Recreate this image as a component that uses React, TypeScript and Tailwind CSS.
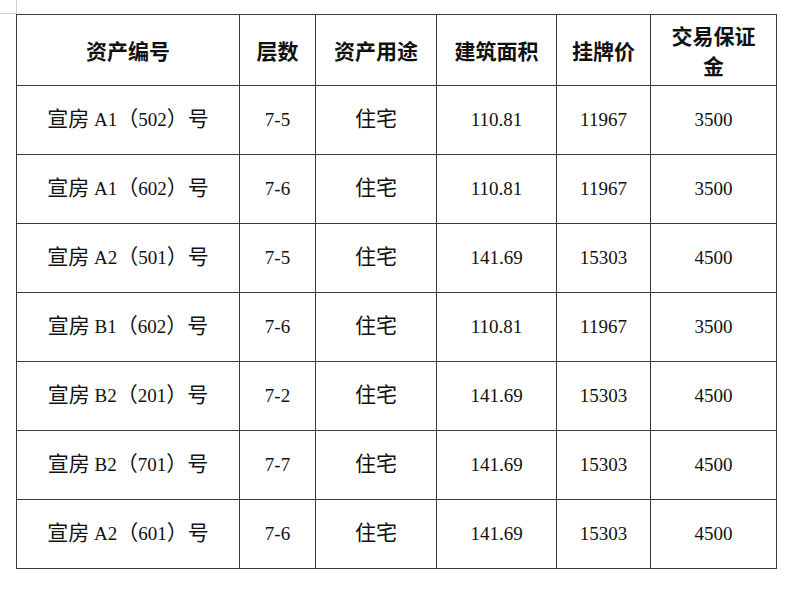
const rows = [
  { id: "宣房 A1（502）号", floor: "7-5", use: "住宅", area: "110.81", price: "11967", deposit: "3500" },
  { id: "宣房 A1（602）号", floor: "7-6", use: "住宅", area: "110.81", price: "11967", deposit: "3500" },
  { id: "宣房 A2（501）号", floor: "7-5", use: "住宅", area: "141.69", price: "15303", deposit: "4500" },
  { id: "宣房 B1（602）号", floor: "7-6", use: "住宅", area: "110.81", price: "11967", deposit: "3500" },
  { id: "宣房 B2（201）号", floor: "7-2", use: "住宅", area: "141.69", price: "15303", deposit: "4500" },
  { id: "宣房 B2（701）号", floor: "7-7", use: "住宅", area: "141.69", price: "15303", deposit: "4500" },
  { id: "宣房 A2（601）号", floor: "7-6", use: "住宅", area: "141.69", price: "15303", deposit: "4500" },
];

const th = "border border-[#3a3a3a] text-center align-middle font-bold text-[21px] leading-[30px] p-0";
const td = "border border-[#3a3a3a] text-center align-middle text-[19px] p-0";

// CJK runs come out a touch larger than the Latin digits in the scan
function Mixed({ text }: { text: string }) {
  const parts = text.split(/([\u3000-\u9fff\uff00-\uffef]+)/);
  return (
    <>
      {parts.map((p, i) =>
        /[\u3000-\u9fff\uff00-\uffef]/.test(p) ? (
          <span key={i} className="text-[21px]">
            {p}
          </span>
        ) : (
          <span key={i}>{p}</span>
        )
      )}
    </>
  );
}

export default function App() {
  return (
    <div className="w-[800px] h-[601px] bg-white text-[#111]">
      <div className="w-[17px] h-[14px] border-r border-b border-[#cfcfcf]" />
      <table
        className="ml-[16px] border-collapse table-fixed w-[760px]"
        style={{ fontFamily: '"Liberation Serif", "Noto Sans CJK SC", serif' }}
      >
        <colgroup>
          <col className="w-[223px]" />
          <col className="w-[76px]" />
          <col className="w-[121px]" />
          <col className="w-[120px]" />
          <col className="w-[94px]" />
          <col className="w-[126px]" />
        </colgroup>
        <thead>
          <tr className="h-[71px] font-['Noto_Sans_CJK_SC',sans-serif]">
            <th className={th}>资产编号</th>
            <th className={th}>层数</th>
            <th className={th}>资产用途</th>
            <th className={th}>建筑面积</th>
            <th className={th}>挂牌价</th>
            <th className={th}>
              交易保证
              <br />金
            </th>
          </tr>
        </thead>
        <tbody>
          {rows.map((r, i) => (
            <tr key={i} className="h-[69px]">
              <td className={td}>
                <Mixed text={r.id} />
              </td>
              <td className={td}>{r.floor}</td>
              <td className={td}>
                <Mixed text={r.use} />
              </td>
              <td className={td}>{r.area}</td>
              <td className={td}>{r.price}</td>
              <td className={td}>{r.deposit}</td>
            </tr>
          ))}
        </tbody>
      </table>
    </div>
  );
}
